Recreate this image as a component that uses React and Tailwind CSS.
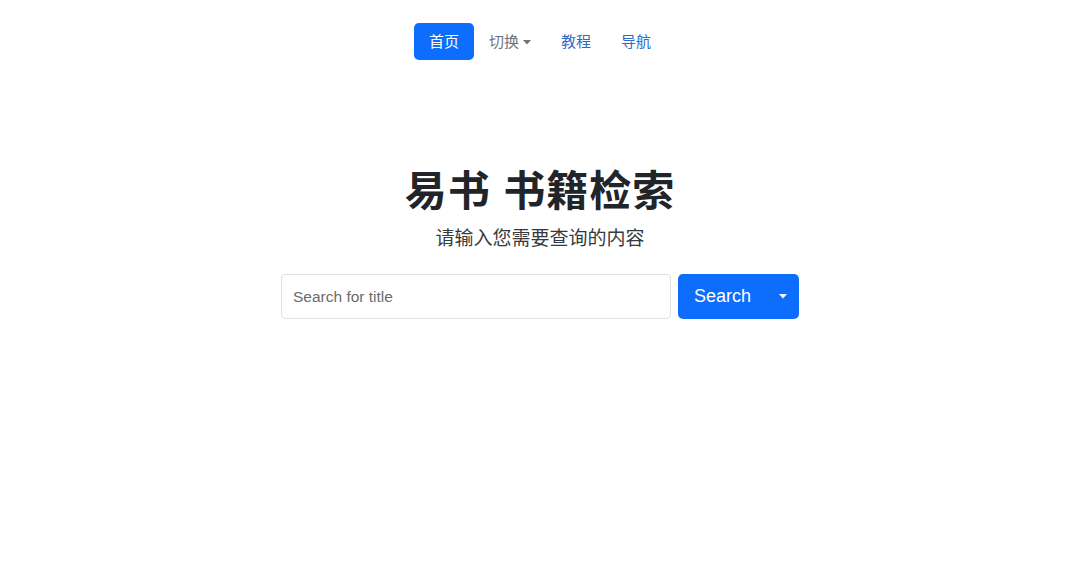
import { useState } from "react";

const NAV = [
  { label: "首页", active: true },
  { label: "切换", dropdown: true },
  { label: "教程" },
  { label: "导航" },
];

function Caret({ className }) {
  return (
    <svg viewBox="0 0 10 6" className={className} fill="currentColor">
      <path d="M0 0h10L5 5.5z" />
    </svg>
  );
}

export default function App() {
  const [query, setQuery] = useState("");

  return (
    <div
      className="min-h-[580px] bg-white text-[#212529]"
      style={{ fontFamily: '"Liberation Sans", "Noto Sans CJK SC", sans-serif' }}
    >
      {/* nav pills */}
      <nav className="flex justify-center pt-[23px]">
        {NAV.map(item => (
          <a
            key={item.label}
            href="#"
            className={
              item.active
                ? "flex h-[37px] items-center rounded-[5px] bg-[#0d6efd] px-[15px] pt-[2px] text-[15px] text-white"
                : item.dropdown
                ? "flex h-[37px] items-center gap-[4px] px-[15px] pt-[2px] text-[15px] text-[#6c757d]"
                : "flex h-[37px] items-center px-[15px] pt-[2px] text-[15px] text-[#2f6ac8]"
            }
          >
            {item.label}
            {item.dropdown && <Caret className="h-[5px] w-[8px]" />}
          </a>
        ))}
      </nav>

      {/* heading */}
      <div className="mt-[107px] flex flex-col items-center">
        <h1 className="text-[42px] font-bold leading-[50px] tracking-[1px]">易书 书籍检索</h1>
        <p className="mt-[7px] text-[19px] leading-[30px] text-[#343a40]">请输入您需要查询的内容</p>

        {/* search */}
        <div className="mt-[20px] flex gap-[7px]">
          <input
            value={query}
            onChange={e => setQuery(e.target.value)}
            placeholder="Search for title"
            className="h-[45px] w-[390px] rounded-[4px] border border-[#dee2e6] px-[11px] text-[15.5px] outline-none placeholder:text-[#6c6c6c]"
          />
          <button className="flex h-[45px] w-[121px] items-center justify-between rounded-[5px] bg-[#0d6efd] pl-[16px] pr-[12px] text-[18px] text-white">
            Search
            <Caret className="h-[5px] w-[8px]" />
          </button>
        </div>
      </div>
    </div>
  );
}
